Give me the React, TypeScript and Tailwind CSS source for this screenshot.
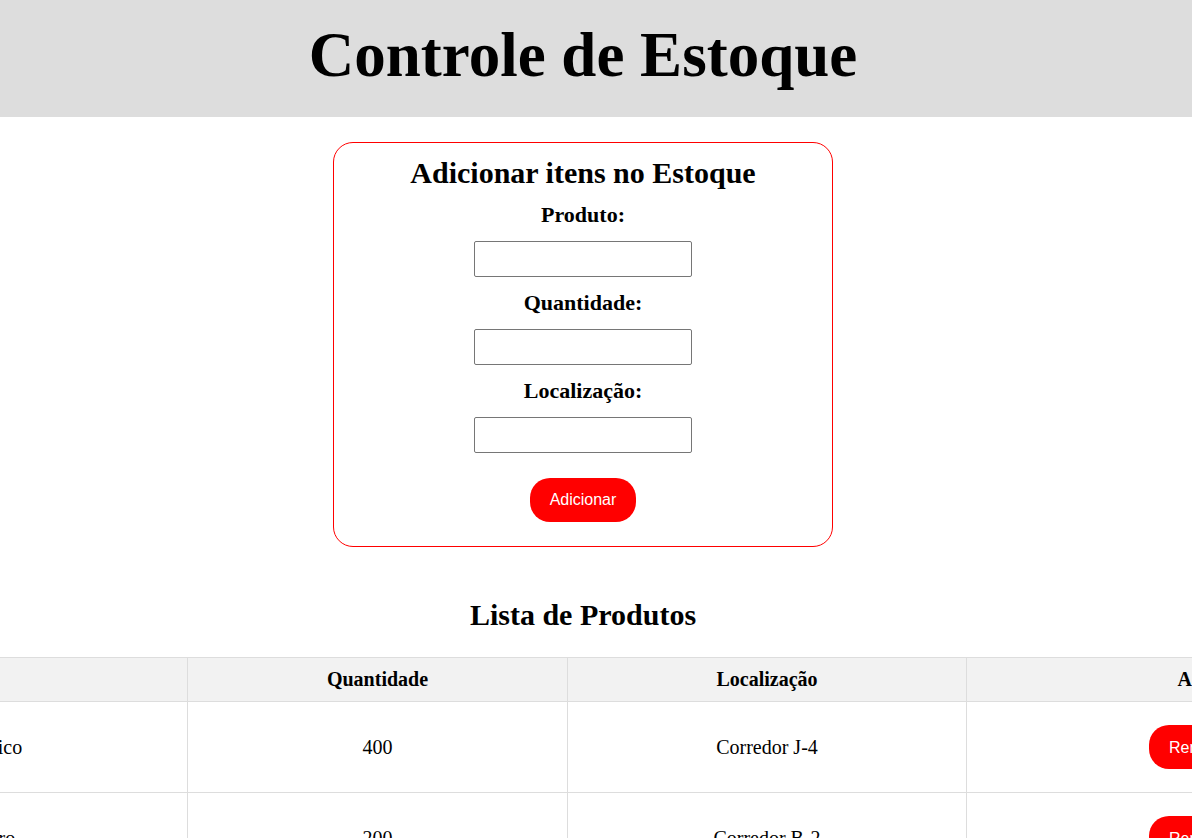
import React from 'react';

interface Produto {
  id: number;
  nome: string;
  quantidade: number;
  localizacao: string;
}

const produtos: Produto[] = [
  { id: 1, nome: 'Quadro Elétrico', quantidade: 400, localizacao: 'Corredor J-4' },
  { id: 2, nome: 'Cano de Ferro', quantidade: 200, localizacao: 'Corredor B-2' },
  { id: 3, nome: 'Parafusos', quantidade: 150, localizacao: 'Corredor A-1' },
];

const Campo: React.FC<{ label: string; first?: boolean }> = ({ label, first }) => (
  <div className={`flex flex-col items-center ${first ? 'mt-[12px]' : 'mt-[13px]'}`}>
    <label className="text-[22px] leading-[25px] font-bold">{label}</label>
    <input
      type="text"
      className="mt-[14px] w-[218px] h-[36px] border border-[#767676] rounded-[2px] bg-white px-1 text-[16px] focus:outline-none"
    />
  </div>
);

const App: React.FC = () => {
  return (
    <div className="w-full h-screen overflow-hidden bg-white text-black font-['Liberation_Serif','Times_New_Roman',serif]">
      <header className="h-[117px] bg-[#dddddd] pt-[20px]">
        <div className="w-[1166px] text-center">
          <h1 className="text-[63px] leading-[71px] font-bold">Controle de Estoque</h1>
        </div>
      </header>

      <main className="w-[1166px] flex flex-col items-center">
        <form
          onSubmit={e => e.preventDefault()}
          className="mt-[25px] w-[500px] border border-[#ff0000] rounded-[20px] pt-[13px] pb-[24px] flex flex-col items-center"
        >
          <h2 className="text-[30px] leading-[34px] font-bold">Adicionar itens no Estoque</h2>
          <Campo label="Produto:" first />
          <Campo label="Quantidade:" />
          <Campo label="Localização:" />
          <button
            type="submit"
            className="mt-[25px] w-[106px] h-[44px] rounded-[20px] bg-[#ff0000] text-white text-[16px] font-['Liberation_Sans',Arial,sans-serif] flex items-center justify-center"
          >
            Adicionar
          </button>
        </form>

        <h2 className="mt-[51px] text-[30px] leading-[34px] font-bold">Lista de Produtos</h2>

        <div className="mt-[25px] w-full flex justify-center">
          <div className="w-[1710px] shrink-0">
            <table className="w-full table-fixed border-collapse text-[20px] leading-[23px]">
              <colgroup>
                <col className="w-[459px]" />
                <col className="w-[380px]" />
                <col className="w-[399px]" />
                <col className="w-[472px]" />
              </colgroup>
              <thead>
                <tr className="bg-[#f2f2f2]">
                  <th className="border border-[#dddddd] py-[10px] font-bold text-center">Produto</th>
                  <th className="border border-[#dddddd] py-[10px] font-bold text-center">Quantidade</th>
                  <th className="border border-[#dddddd] py-[10px] font-bold text-center">Localização</th>
                  <th className="border border-[#dddddd] py-[10px] font-bold text-center">Ações</th>
                </tr>
              </thead>
              <tbody>
                {produtos.map(p => (
                  <tr key={p.id}>
                    <td className="border border-[#dddddd] py-[23px] text-center align-middle">{p.nome}</td>
                    <td className="border border-[#dddddd] py-[23px] text-center align-middle">{p.quantidade}</td>
                    <td className="border border-[#dddddd] py-[23px] text-center align-middle">{p.localizacao}</td>
                    <td className="border border-[#dddddd] py-[23px] align-middle">
                      <div className="flex justify-center pr-[2px]">
                        <button className="w-[106px] h-[44px] rounded-[20px] bg-[#ff0000] text-white text-[16px] font-['Liberation_Sans',Arial,sans-serif] flex items-center justify-center">
                          Remover
                        </button>
                      </div>
                    </td>
                  </tr>
                ))}
              </tbody>
            </table>
          </div>
        </div>
      </main>
    </div>
  );
};

export default App;
